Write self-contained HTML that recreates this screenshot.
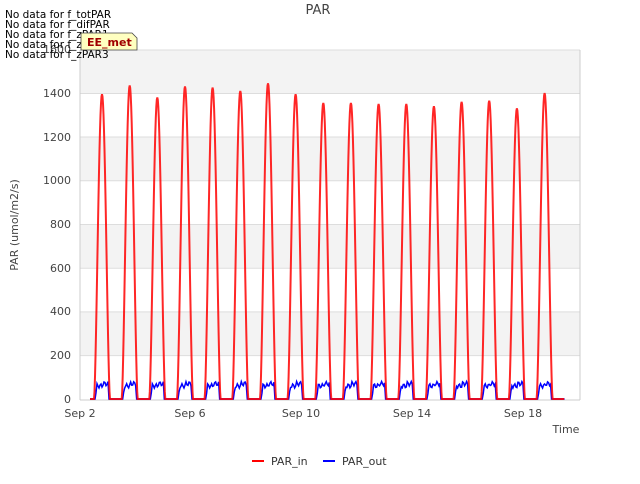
<!DOCTYPE html><html><head><style>
body{margin:0;width:640px;height:480px;background:#fff;font-family:"DejaVu Sans",sans-serif;overflow:hidden}
</style></head><body>
<svg id="s" width="640" height="480" xmlns="http://www.w3.org/2000/svg" font-family="DejaVu Sans, sans-serif">
<rect x="80" y="50" width="500" height="350" fill="#fff"/>
<rect x="80" y="50" width="500" height="43.7" fill="#f3f3f3"/>
<rect x="80" y="137" width="500" height="43.7" fill="#f3f3f3"/>
<rect x="80" y="224.5" width="500" height="43.7" fill="#f3f3f3"/>
<rect x="80" y="311.9" width="500" height="43.7" fill="#f3f3f3"/>
<g stroke="#ddd" stroke-width="1">
<line x1="80" x2="580" y1="93.5" y2="93.5"/><line x1="80" x2="580" y1="137" y2="137"/><line x1="80" x2="580" y1="180.7" y2="180.7"/><line x1="80" x2="580" y1="224.5" y2="224.5"/><line x1="80" x2="580" y1="268.2" y2="268.2"/><line x1="80" x2="580" y1="311.9" y2="311.9"/><line x1="80" x2="580" y1="355.6" y2="355.6"/>
<line x1="80" x2="580" y1="50" y2="50"/>
</g>
<line x1="80" x2="80" y1="50" y2="400" stroke="#ccc"/><line x1="580" x2="580" y1="50" y2="400" stroke="#ccc"/><line x1="80" x2="580" y1="400" y2="400" stroke="#ccc"/>
<g font-size="11" fill="#444" text-anchor="end">
<text x="71" y="403">0</text><text x="71" y="359">200</text><text x="71" y="315">400</text><text x="71" y="272">600</text><text x="71" y="228">800</text><text x="71" y="184">1000</text><text x="71" y="141">1200</text><text x="71" y="97">1400</text><text x="71" y="53">1600</text>
</g>
<g font-size="11" fill="#444" text-anchor="middle">
<text x="80" y="417">Sep 2</text><text x="190" y="417">Sep 6</text><text x="301" y="417">Sep 10</text><text x="412" y="417">Sep 14</text><text x="523" y="417">Sep 18</text>
</g>
<text x="566" y="433" font-size="11" fill="#444" text-anchor="middle">Time</text>
<text x="18" y="225" font-size="11" fill="#444" text-anchor="middle" transform="rotate(-90 18 225)">PAR (umol/m2/s)</text>
<text x="318" y="14" font-size="13" fill="#444" text-anchor="middle">PAR</text>
<g id="d"></g>
<g font-size="10.5" fill="#000">
<text x="5" y="18">No data for f_totPAR</text><text x="5" y="28">No data for f_difPAR</text><text x="5" y="38">No data for f_zPAR1</text><text x="5" y="48">No data for f_zPAR2</text><text x="5" y="58">No data for f_zPAR3</text>
</g>
<path d="M81 33 H132 L137 38 V50 H81 Z" fill="#ffffc0" stroke="#444" stroke-width="0.8"/>
<text x="87" y="46" font-size="11" font-weight="bold" fill="#a00000">EE_met</text>
<line x1="252" x2="264" y1="461" y2="461" stroke="#f00" stroke-width="2"/><text x="271" y="465" font-size="11" fill="#333">PAR_in</text>
<line x1="323" x2="335" y1="461" y2="461" stroke="#00f" stroke-width="2"/><text x="342" y="465" font-size="11" fill="#333">PAR_out</text>
</svg>
<script>
var pk=[1395,1435,1380,1430,1425,1410,1445,1395,1355,1355,1350,1350,1340,1360,1365,1330,1400];
var r="",b="";var Y=v=>399-v*0.2185;
r+="M90 "+Y(0);b+="M90 "+Y(0);
for(var i=0;i<pk.length;i++){var c=102+27.66*i;
for(var x=c-8;x<=c+8;x+=0.5){var t=(x-c)/8;var v=Math.max(0,pk[i]*Math.pow(Math.cos(Math.PI*t/2),1.6));r+=" L"+x.toFixed(1)+" "+Y(v).toFixed(1);}
for(var x=c-7;x<=c+7;x+=1){var t=Math.abs(x-c)/7;var v=t>0.9?0:60+10*Math.sin(x*1.7)+ (x>c?10:0);if(x<c-5)v*=0.5;b+=" L"+x+" "+Y(v).toFixed(1);}
r+=" L"+(c+19.6).toFixed(1)+" "+Y(0);b+=" L"+(c+20).toFixed(1)+" "+Y(0);}
r+=" L560 "+Y(0);b+=" L560 "+Y(0);
document.getElementById("d").innerHTML='<path d="'+b+'" fill="none" stroke="#00f" stroke-width="1.5"/><path d="'+r+'" fill="none" stroke="#f00" stroke-width="2" stroke-opacity="0.85"/>';
</script>
</body></html>
